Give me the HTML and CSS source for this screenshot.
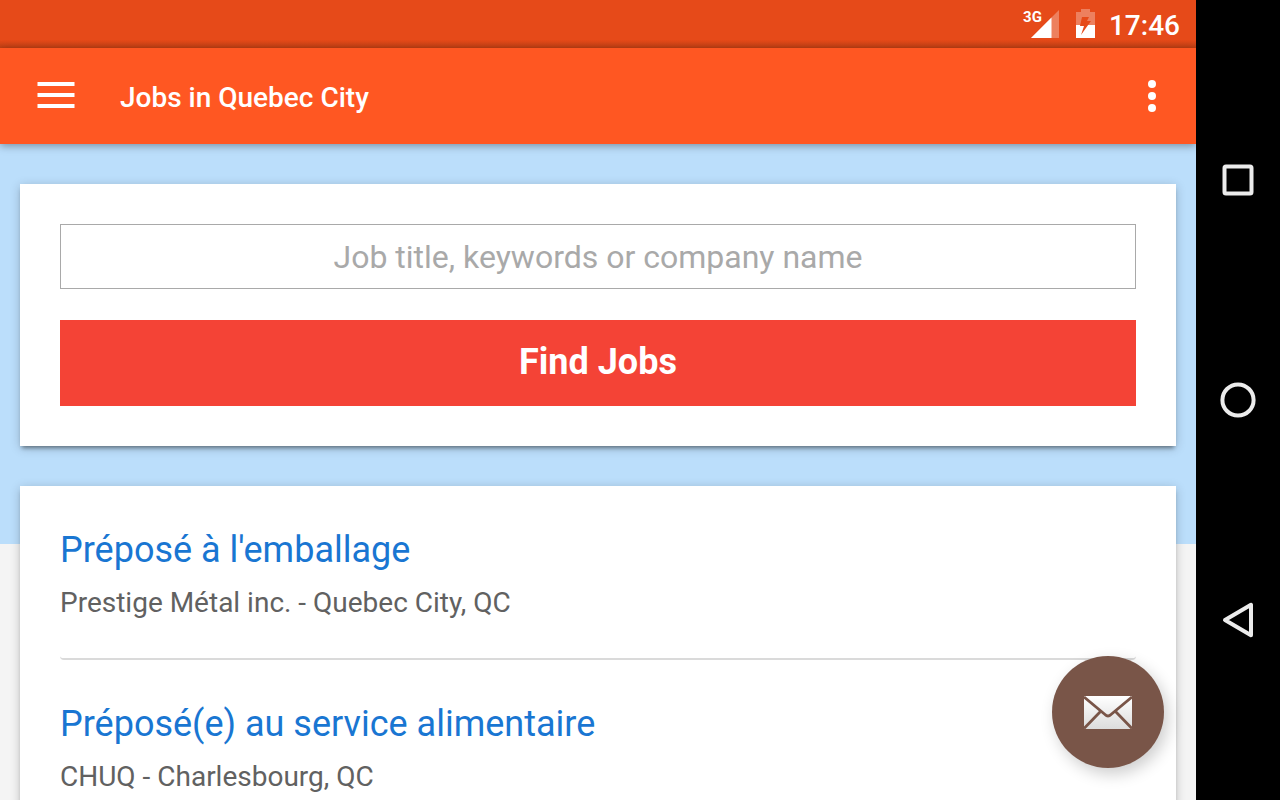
FILE: index.html
```
<!DOCTYPE html>
<html lang="en">
<head>
    <meta charset="UTF-8">
    <meta name="viewport" content="width=device-width, initial-scale=1.0">
    <title>Jobs in Quebec City</title>
    <link rel="stylesheet" href="styles.css">
</head>
<body>
    <div class="screen">
        <div class="status-bar">
            <div class="signal">
                <span class="network">3G</span>
                <svg width="28" height="28" viewBox="0 0 28 28">
                    <path d="M0 28L28 0V28Z" fill="#fff" fill-opacity=".3"/>
                    <path d="M0 28L20.5 7.5V28Z" fill="#fff"/>
                </svg>
            </div>
            <svg class="battery" width="19" height="30" viewBox="0 0 19 30">
                <path d="M5 0h9v3h5v13h-6.900L15 12h-4l2-4H6L4.200 16H0V3h5z" fill="#fff" fill-opacity=".3"/>
                <path d="M0 16h4.200L4 17h4L5 26l7.100-10H19v13H0z" fill="#fff"/>
            </svg>
            <span class="clock">17:46</span>
        </div>

        <header class="toolbar">
            <button class="icon-btn menu-btn" aria-label="Menu">
                <svg width="38" height="26" viewBox="0 0 38 26" fill="#fff">
                    <path d="M.5 0h37v4H.5zM.5 11h37v4H.5zM.5 22h37v4H.5z"/>
                </svg>
            </button>
            <h1>Jobs in Quebec City</h1>
            <button class="icon-btn more-btn" aria-label="More options">
                <svg width="8" height="32" viewBox="0 0 8 32" fill="#fff">
                    <circle cx="4" cy="4" r="4"/>
                    <circle cx="4" cy="16" r="4"/>
                    <circle cx="4" cy="28" r="4"/>
                </svg>
            </button>
        </header>

        <main class="content">
            <form class="card search-card">
                <input type="text" name="q" aria-label="Job search" placeholder="Job title, keywords or company name">
                <button type="submit">Find Jobs</button>
            </form>

            <div class="card job-list">
                <div class="job">
                    <h2><a href="#">Préposé à l'emballage</a></h2>
                    <p>Prestige Métal inc. - Quebec City, QC</p>
                </div>
                <div class="job">
                    <h2><a href="#">Préposé(e) au service alimentaire</a></h2>
                    <p>CHUQ - Charlesbourg, QC</p>
                </div>
            </div>
        </main>

        <button class="fab" aria-label="Email">
            <svg width="48" height="33" viewBox="0 0 48 33">
                <defs>
                    <linearGradient id="paper" x1="0" y1="0" x2="0" y2="1">
                        <stop offset="0" stop-color="#fff"/>
                        <stop offset="1" stop-color="#dcdcdc"/>
                    </linearGradient>
                </defs>
                <rect width="48" height="33" rx="1" fill="url(#paper)"/>
                <path d="M0 1L21 18.500Q24 21.500 27 18.500L48 1M0 32.500L16 16M48 32.500L32 16" fill="none" stroke="#795548" stroke-width="2.800"/>
            </svg>
        </button>
    </div>

    <nav class="nav-bar">
        <button class="icon-btn" aria-label="Recent apps">
            <svg width="36" height="36" viewBox="0 0 36 36">
                <rect x="4.500" y="4.500" width="27" height="27" rx="1.500"/>
            </svg>
        </button>
        <button class="icon-btn" aria-label="Home">
            <svg width="36" height="36" viewBox="0 0 36 36">
                <circle cx="18" cy="18" r="15.600"/>
            </svg>
        </button>
        <button class="icon-btn" aria-label="Back">
            <svg width="36" height="36" viewBox="0 0 36 36">
                <path d="M5 18L31 2.800V33.200Z"/>
            </svg>
        </button>
    </nav>
</body>
</html>
```
FILE: styles.css
```
* {
    box-sizing: border-box;
}

body {
    display: flex;
    height: 100vh;
    margin: 0;
    overflow: hidden;
    background-color: #000;
    font-family: Roboto, Arial, sans-serif;
}

h1, h2, p {
    margin: 0;
}

button {
    border: 0;
    font-family: inherit;
    cursor: pointer;
}

svg {
    display: block;
}

.screen {
    position: relative;
    display: flex;
    flex: 1;
    flex-direction: column;
    min-width: 0;
    overflow: hidden;
    background-color: #f4f4f4;
}

/* status bar */
.status-bar {
    display: flex;
    flex-shrink: 0;
    align-items: center;
    justify-content: flex-end;
    height: 48px;
    padding-right: 16px;
    background: linear-gradient(to top, #c04014, #e64a19 8px);
    color: #fff;
}

.signal {
    position: relative;
    margin-right: 17px;
}

.network {
    position: absolute;
    top: 0;
    right: 17px;
    font-size: 15px;
    font-weight: bold;
    line-height: 15px;
}

.clock {
    margin-left: 14px;
    padding-top: 2px;
    font-size: 28px;
    font-weight: 500;
}

/* toolbar */
.toolbar {
    display: flex;
    flex-shrink: 0;
    align-items: center;
    height: 96px;
    background-color: #ff5722;
    color: #fff;
    box-shadow: 0 2px 8px rgba(0, 0, 0, 0.35);
    z-index: 1;
}

.toolbar h1 {
    flex: 1;
    padding-top: 2px;
    font-size: 28px;
    font-weight: 500;
}

.icon-btn {
    display: flex;
    align-items: center;
    justify-content: center;
    padding: 0;
    background: none;
}

.menu-btn {
    width: 112px;
    height: 96px;
    margin-right: 8px;
    padding-bottom: 2px;
}

.more-btn {
    width: 88px;
    height: 96px;
}

/* content */
.content {
    flex: 1;
    min-height: 0;
    padding: 40px 20px;
    overflow: hidden;
    background: linear-gradient(#bbdefb, #bbdefb) no-repeat 0 0 / 100% 400px;
}

.card {
    margin-bottom: 40px;
    padding: 40px;
    background-color: #fff;
    box-shadow: 0 4px 4px -2px rgba(0, 0, 0, 0.4), 0 2px 10px rgba(0, 0, 0, 0.2);
}

.search-card input {
    display: block;
    width: 100%;
    height: 65px;
    margin-bottom: 31px;
    padding: 0 16px;
    border: 1px solid #a9a9a9;
    border-radius: 0;
    font-family: inherit;
    font-size: 32px;
    text-align: center;
}

.search-card input::placeholder {
    color: #a9a9a9;
}

.search-card button {
    display: block;
    width: 100%;
    height: 86px;
    padding: 0 0 2px;
    background-color: #f44336;
    color: #fff;
    font-size: 36px;
    font-weight: bold;
}

.job {
    margin-bottom: 40px;
    padding-bottom: 36px;
    border-bottom: 2px solid #dadada;
    border-radius: 4px;
}

.job h2 {
    margin-bottom: 10px;
    font-size: 36px;
    font-weight: normal;
    line-height: 48px;
}

.job a {
    color: #1976d2;
    text-decoration: none;
}

.job p {
    color: #616161;
    font-size: 28px;
    line-height: 38px;
}

.fab {
    position: absolute;
    right: 32px;
    bottom: 32px;
    z-index: 2;
    display: flex;
    align-items: center;
    justify-content: center;
    width: 112px;
    height: 112px;
    padding: 0;
    border-radius: 50%;
    background-color: #795548;
    box-shadow: 4px 6px 16px rgba(0, 0, 0, 0.2);
}

/* system navigation */
.nav-bar {
    display: flex;
    flex-shrink: 0;
    flex-direction: column;
    align-items: center;
    justify-content: space-around;
    width: 84px;
    padding: 70px 0;
    background-color: #000;
}

.nav-bar svg {
    fill: none;
    stroke: #ececec;
    stroke-width: 4;
    stroke-linejoin: round;
}
```
